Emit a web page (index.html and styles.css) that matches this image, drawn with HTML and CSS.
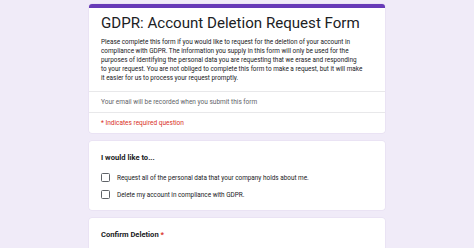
FILE: index.html
```html
<!DOCTYPE html>
<html lang="en">
<head>
<meta charset="utf-8">
<title>GDPR: Account Deletion Request Form</title>
<link rel="stylesheet" href="styles.css">
</head>
<body>
<main class="form">
  <section class="card card-header">
    <div class="intro">
      <h1 class="title">GDPR: Account Deletion Request Form</h1>
      <p class="desc">Please complete this form if you would like to request for the deletion of your account in<br>compliance with GDPR. The information you supply in this form will only be used for the<br>purposes of identifying the personal data you are requesting that we erase and responding<br>to your request. You are not obliged to complete this form to make a request, but it will make<br>it easier for us to process your request promptly.</p>
    </div>
    <div class="row email">Your email will be recorded when you submit this form</div>
    <div class="row required">* Indicates required question</div>
  </section>

  <section class="card question">
    <h2 class="q-title">I would like to...</h2>
    <label class="option"><span class="box"></span><span>Request all of the personal data that your company holds about me.</span></label>
    <label class="option"><span class="box"></span><span>Delete my account in compliance with GDPR.</span></label>
  </section>

  <section class="card question last">
    <h2 class="q-title">Confirm Deletion <span class="star">*</span></h2>
  </section>
</main>
</body>
</html>
```
FILE: styles.css
```css
html, body {
  margin: 0;
  padding: 0;
  background: #f0ebf8;
  height: 100%;
  overflow: hidden;
}
body {
  font-family: Roboto, "Liberation Sans", Arial, sans-serif;
  color: #202124;
}
.form {
  width: 296px;
  margin: 0 auto;
  padding-top: 4px;
  display: flex;
  flex-direction: column;
  gap: 8px;
}
.card {
  background: #fff;
  border-radius: 3px;
  box-shadow: 0 0 0 0.5px #e3dcef;
}
.card-header {
  border-top: 4px solid #673ab7;
}
.intro {
  padding: 5px 12px 8px;
}
.title {
  margin: 0;
  font-family: Roboto, "Open Sans", sans-serif;
  font-weight: 400;
  font-size: 15.1px;
  line-height: 20px;
  white-space: nowrap;
  color: #202124;
}
.desc {
  margin: 5px 0 0;
  font-size: 6.4px;
  line-height: 9px;
  white-space: nowrap;
  color: #202124;
}
.row {
  border-top: 1px solid #e8e8ea;
  padding: 0 12px;
  font-size: 6.5px;
  line-height: 20px;
}
.email {
  color: #5f6368;
}
.required {
  color: #d93025;
  line-height: 20px;
}
.question {
  padding: 12px 12px 7px;
}
.q-title {
  margin: 0 0 6px;
  font-size: 7.6px;
  font-weight: 700;
  line-height: 10px;
  color: #202124;
}
.star {
  color: #d93025;
}
.option {
  display: flex;
  align-items: center;
  gap: 7px;
  height: 17px;
  font-size: 6.4px;
  color: #202124;
}
.box {
  width: 7px;
  height: 7px;
  border: 1px solid #5f6368;
  border-radius: 1.5px;
  flex: none;
}
.last {
  padding-bottom: 40px;
}
```
